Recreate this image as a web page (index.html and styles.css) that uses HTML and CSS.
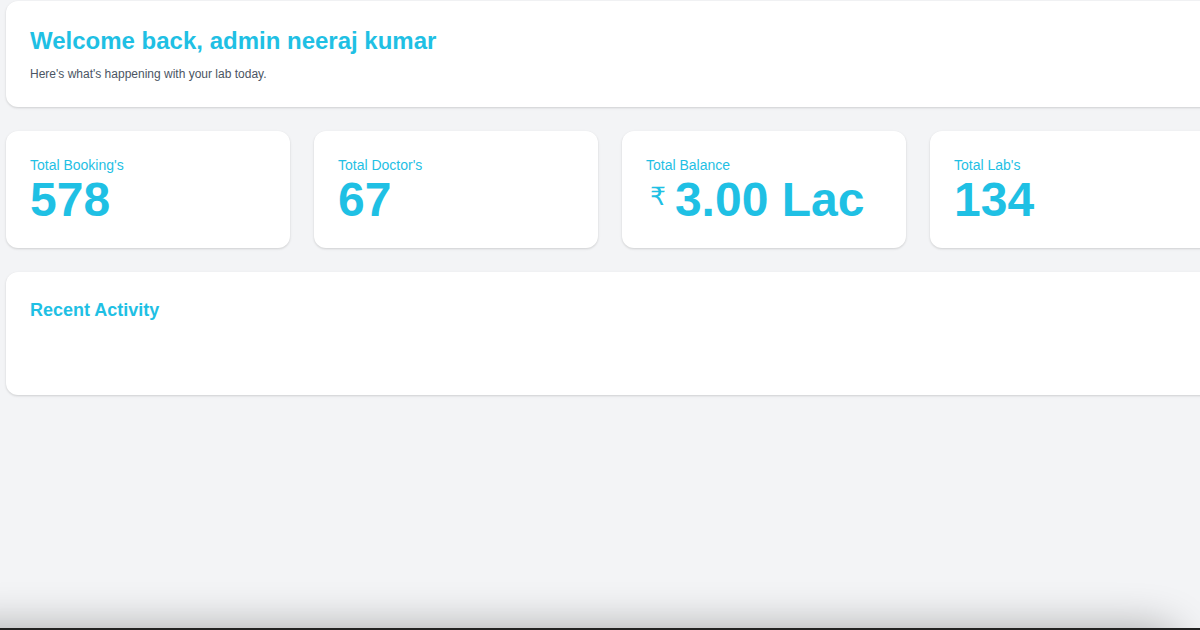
FILE: index.html
```html
<!DOCTYPE html>
<html lang="en">
<head>
    <meta charset="UTF-8">
    <meta name="viewport" content="width=device-width, initial-scale=1.0">
    <link rel="stylesheet" href="styles.css">
    <title>Dashboard</title>
</head>
<body>
    <div class="dashboard">
        <div class="card welcome">
            <h1>Welcome back, admin neeraj kumar</h1>
            <p>Here's what's happening with your lab today.</p>
        </div>

        <div class="stats">
            <div class="card stat">
                <h2>Total Booking's</h2>
                <p class="stat-value">578</p>
            </div>
            <div class="card stat">
                <h2>Total Doctor's</h2>
                <p class="stat-value">67</p>
            </div>
            <div class="card stat">
                <h2>Total Balance</h2>
                <p class="stat-value"><span class="rupee">₹</span>3.00 Lac</p>
            </div>
            <div class="card stat">
                <h2>Total Lab's</h2>
                <p class="stat-value">134</p>
            </div>
        </div>

        <div class="card activity">
            <h2>Recent Activity</h2>
            <div class="activity-list">
                <!-- activity items go here -->
            </div>
        </div>
    </div>

    <!-- panel peeking in from below the window -->
    <div class="bottom-sheet"></div>
    <div class="bottom-line"></div>
</body>
</html>
```

FILE: styles.css
```css
html, body {
    margin: 0;
    padding: 0;
    overflow: hidden;
  }

  body {
    background-color: #f3f4f6;
    font-family: "Liberation Sans", Arial, sans-serif;
    color: #1fc0e4;
    height: 630px;
  }

  .dashboard {
    width: 1208px;
    margin-left: 6px;
    padding-top: 1px;
    display: flex;
    flex-direction: column;
    gap: 24px;
  }

  .card {
    background-color: #fff;
    border-radius: 12px;
    box-shadow: 0 1px 3px rgba(0, 0, 0, 0.1), 0 1px 2px rgba(0, 0, 0, 0.06);
    padding: 24px;
  }

  .welcome {
    padding-bottom: 25px;
  }

  .welcome h1 {
    margin: 0;
    font-size: 24px;
    line-height: 32px;
    font-weight: bold;
  }

  .welcome p {
    margin: 9px 0 0;
    font-size: 12px;
    line-height: 16px;
    color: #4b5563;
  }

  .stats {
    display: grid;
    grid-template-columns: repeat(4, 1fr);
    gap: 24px;
  }

  .stat h2 {
    margin: 0;
    font-size: 14px;
    line-height: 20px;
    font-weight: normal;
  }

  .stat-value {
    margin: 1px 0 0;
    font-size: 48px;
    line-height: 48px;
    font-weight: bold;
    display: flex;
    align-items: center;
  }

  .rupee {
    font-family: "DejaVu Sans", sans-serif;
    font-weight: normal;
    font-size: 25px;
    line-height: 30px;
    margin: 0 9px 0 4px;
    position: relative;
    top: -3px;
  }

  .activity h2 {
    margin: 0;
    font-size: 18px;
    line-height: 28px;
    font-weight: bold;
  }

  .activity-list {
    margin-top: 16px;
    height: 31px;
  }

  .bottom-sheet {
    position: fixed;
    left: -60px;
    right: 22px;
    top: 628px;
    height: 120px;
    background-color: #222;
    border-radius: 24px;
    box-shadow: 0 0 44px rgba(0, 0, 0, 0.32);
  }

  .bottom-line {
    position: fixed;
    left: 0;
    right: 0;
    top: 628px;
    height: 2px;
    background-color: #222;
  }
```
